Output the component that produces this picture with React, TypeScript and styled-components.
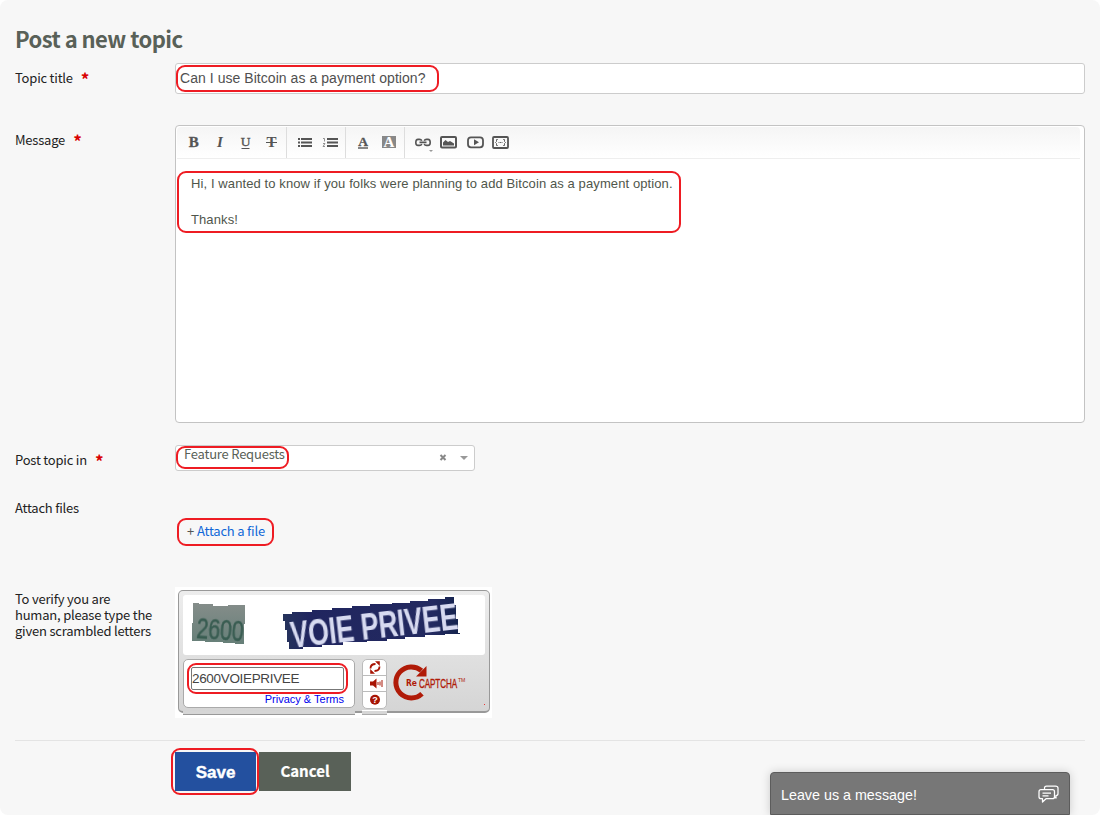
import React from 'react';
import styled, { createGlobalStyle } from 'styled-components';

const SOURCE = '"Noto Sans CJK SC", "Open Sans", sans-serif';
const ARIAL = '"Liberation Sans", Arial, sans-serif';

const Global = createGlobalStyle`
  * { box-sizing: border-box; }
  body { margin: 0; background: #fff; }
  svg { display: block; }
`;

const Page = styled.main`
  position: relative;
  width: 1100px;
  height: 815px;
  padding: 25px 15px 0;
  overflow: hidden;
  border-radius: 8px;
  background: #f7f7f7;
  color: #222;
  font: 13px/16px ${SOURCE};
  letter-spacing: -0.21px;
`;

const Heading = styled.h1`
  height: 38px;
  margin: 0;
  color: #596158;
  font-size: 22px;
  font-weight: 700;
  line-height: 26px;
  letter-spacing: -0.55px;
  white-space: nowrap;
`;

const Row = styled.div<{ $height: number }>`
  display: grid;
  grid-template-columns: 160px 910px;
  height: ${(p) => p.$height}px;
`;

const Label = styled.label<{ $top: number }>`
  padding-top: ${(p) => p.$top}px;
  white-space: pre-line;
`;

const Star = styled.span`
  margin-left: 8px;
  color: #d90000;
  font-size: 17px;
  font-weight: 700;
  line-height: 0;
  vertical-align: -3px;
`;

const Field = styled.div`
  position: relative;
`;

const Mark = styled.span<{ $x: number; $y: number; $w: number; $h: number }>`
  position: absolute;
  left: ${(p) => p.$x}px;
  top: ${(p) => p.$y}px;
  width: ${(p) => p.$w}px;
  height: ${(p) => p.$h}px;
  border: 2px solid #ee1c23;
  border-radius: 9px;
  pointer-events: none;
`;

const TitleInput = styled.div`
  height: 31px;
  padding: 0 4px;
  border: 1px solid #ccc;
  border-radius: 3px;
  background: #fff;
  color: #505050;
  font: 14px/28px ${ARIAL};
  letter-spacing: 0.05px;
`;

const Editor = styled.div`
  height: 298px;
  border: 1px solid #c3c3c3;
  border-radius: 4px;
  background: #fff;
`;

const Toolbar = styled.div`
  display: flex;
  height: 32px;
  margin: 1px 4px 0 1px;
  border-bottom: 1px solid #eee;
  border-radius: 4px 4px 0 0;
  background: linear-gradient(#f5f5f5, #fff);
`;

const Group = styled.div<{ $left: number; $right: number; $last?: boolean }>`
  display: flex;
  align-items: flex-start;
  padding: 2px ${(p) => p.$right}px 0 ${(p) => p.$left}px;
  border-right: ${(p) => (p.$last ? 'none' : '1px solid #ddd')};
`;

const Tool = styled.span`
  width: 26px;
  height: 26px;
`;

const Message = styled.div`
  padding: 16px 15px;
  color: #4f564b;
  font: 13px/18px ${ARIAL};
  letter-spacing: 0.1px;
  white-space: pre-line;
`;

const Select = styled.div`
  display: flex;
  width: 300px;
  height: 26px;
  padding: 0 3px 0 8px;
  border: 1px solid #ccc;
  border-radius: 3px;
  background: #fff;
  color: #596158;
  line-height: 16px;
`;

const SelectValue = styled.span`
  flex: 1;
`;

const Attach = styled.a`
  display: block;
  padding: 30px 0 0 12px;
  color: #1068d8;
`;

const Plus = styled.span`
  margin-right: 3px;
  color: #555;
`;

const CaptchaFrame = styled.div`
  position: relative;
  width: 317px;
  height: 131px;
  padding: 3px;
  background: #fff;
`;

const Captcha = styled.div`
  width: 312px;
  height: 123px;
  padding: 4px;
  border: 1px solid #999;
  border-width: 1px 1px 2px;
  border-radius: 5px;
  background: linear-gradient(#ededed, #d5d5d5);
`;

const Challenge = styled.div`
  height: 60px;
  border-radius: 3px;
  background: #fff;

  svg { overflow: visible; }
`;

const CaptchaControls = styled.div`
  display: flex;
  align-items: flex-start;
  padding-top: 4px;
`;

const Lip = styled.span<{ $x: number; $w: number; $y: number; $h: number; $edge?: string }>`
  position: absolute;
  left: ${(p) => p.$x}px;
  top: ${(p) => p.$y}px;
  width: ${(p) => p.$w}px;
  height: ${(p) => p.$h}px;
  background: ${(p) => (p.$edge ? '#d6d6d6' : '#fff')};
  border-bottom: ${(p) => (p.$edge ? `1px solid ${p.$edge}` : 'none')};
`;

const AnswerBox = styled.div`
  position: relative;
  width: 172px;
  height: 49px;
  padding: 7px 10px 0 7px;
  border: 1px solid #aaa;
  border-radius: 5px;
  background: #fff;
`;

const Answer = styled.div`
  height: 23px;
  border: 1px solid #777;
  border-radius: 2px;
  color: #444;
  font: 13.5px/22px ${ARIAL};
  letter-spacing: -0.33px;
`;

const Terms = styled.a`
  display: block;
  color: #00e;
  font: 11px/19px ${ARIAL};
  letter-spacing: 0;
  text-align: right;
`;

const CaptchaButtons = styled.div`
  display: flex;
  flex-direction: column;
  width: 25px;
  height: 50px;
  margin: 0 5px 0 7px;
  overflow: hidden;
  border: 1px solid #bbb;
  border-radius: 5px;
  background: #fff;
`;

const CaptchaButton = styled.span`
  height: 16px;
  border-bottom: 1px solid #bbb;
  &:last-child { border: 0; }
`;

const Actions = styled.div`
  position: relative;
  display: flex;
  gap: 3px;
  height: 75px;
  padding: 11px 0 0 160px;
  border-top: 1px solid #e4e4e4;
`;

const Button = styled.button<{ $primary?: boolean }>`
  width: ${(p) => (p.$primary ? 81 : 92)}px;
  height: 39px;
  padding: 0;
  border: 0;
  background: ${(p) => (p.$primary ? '#23509f' : '#596158')};
  color: #fff;
  font: 700 ${(p) => (p.$primary ? `17px/21px ${ARIAL}` : `15px/20px ${SOURCE}`)};
  letter-spacing: 0;
  padding: ${(p) => (p.$primary ? '1px 0 0' : '0 0 2px')};
  -webkit-text-stroke: ${(p) => (p.$primary ? '0.4px #fff' : '0.2px #fff')};
`;

const Chat = styled.aside`
  position: absolute;
  left: 770px;
  top: 772px;
  display: flex;
  align-items: center;
  justify-content: space-between;
  width: 300px;
  height: 43px;
  padding: 2px 10px 0 10px;
  border: 1px solid #5c5c5c;
  border-radius: 4px 4px 0 0;
  background: #777;
  box-shadow: 0 0 10px rgba(0, 0, 0, 0.18);
  color: #fff;
  font: 14.3px/20px ${ARIAL};
  letter-spacing: 0;
`;

const Glyph = styled.text`
  font: 700 15px "Liberation Serif", serif;
  letter-spacing: 0;
  text-anchor: middle;
  fill: #555;
`;

const Icon = ({ children }: { children: React.ReactNode }) => (
  <Tool><svg width="26" height="26" viewBox="0 0 26 26" fill="none" stroke="none">{children}</svg></Tool>
);

export default function App() {
  return (
    <Page>
      <Global />
      <Heading>Post a new topic</Heading>

      <Row $height={62}>
        <Label $top={7}>Topic title<Star>*</Star></Label>
        <Field>
          <TitleInput>Can I use Bitcoin as a payment option?</TitleInput>
          <Mark $x={1} $y={2} $w={263} $h={27} />
        </Field>
      </Row>

      <Row $height={320}>
        <Label $top={7}>Message<Star>*</Star></Label>
        <Field>
          <Editor>
            <Toolbar>
              <Group $left={3} $right={2}>
                <Icon><Glyph x="13.7" y="18" stroke="#555" strokeWidth=".3">B</Glyph></Icon>
                <Icon><Glyph x="14" y="18" fontStyle="italic" style={{ fontStyle: 'italic' }}>I</Glyph></Icon>
                <Icon><text x="13.5" y="16.5" textAnchor="middle" fontFamily="Liberation Serif, serif" fontSize="13.5" fill="#555" stroke="#555" strokeWidth=".35">U</text><path d="M9.5 19.5h8" stroke="#555" /></Icon>
                <Icon><Glyph x="13.5" y="18">T</Glyph><path d="M8 13.5h11" stroke="#555" /></Icon>
              </Group>
              <Group $left={5} $right={1}>
                <Icon><path d="M6 10h2M6 13.5h2M6 17h2M9 10h11M9 13.5h11M9 17h11" stroke="#555" strokeWidth="2" /></Icon>
                <Icon><path d="M9 10h11M9 13.5h11M9 17h11" stroke="#555" strokeWidth="2" /><path d="M5 9.5h1.5v3M5 14.5h2l-2 3h2" stroke="#777" strokeWidth=".8" /></Icon>
              </Group>
              <Group $left={4} $right={2}>
                <Icon><Glyph x="13" y="17" style={{ fontSize: 13.5 }} stroke="#555" strokeWidth=".3">A</Glyph><path d="M8 19h10" stroke="#555" strokeWidth="1.4" /></Icon>
                <Icon><path d="M6 7h14v12H6z" fill="#888" /><Glyph x="13" y="18" style={{ fill: '#fff' }}>A</Glyph></Icon>
              </Group>
              <Group $left={5} $right={0} $last>
                <Icon><path d="M11.8 11.8Q11.2 10.4 9.5 10.4H8Q5.8 10.4 5.8 13.4T8 16.4H9.5Q11.2 16.4 11.8 15M14.2 11.8Q14.8 10.4 16.5 10.4H18Q20.2 10.4 20.2 13.4T18 16.4H16.5Q14.8 16.4 14.2 15M9.5 13.4h7" stroke="#555" strokeWidth="1.6" /><path d="m19 21h4l-2 2z" fill="#999" /></Icon>
                <Icon><rect x="5" y="8" width="15" height="10.4" rx="1" stroke="#555" strokeWidth="2" /><path d="M7 16.5v-3l2.5-2.5 2.5 2 2-1 4 2.5v2z" fill="#555" /></Icon>
                <Icon><rect x="6" y="8.3" width="15" height="10" rx="3" stroke="#555" strokeWidth="1.8" /><path d="m12 10.3 5 3-5 3z" fill="#555" /></Icon>
                <Icon><rect x="5" y="8" width="15" height="11" rx="1" stroke="#555" strokeWidth="1.8" /><path d="M9.8 10.5H8.5v2L7.5 13.5l1 1v2h1.3M15.2 10.5h1.3v2l1 1-1 1v2h-1.3M10.5 13.5h1M12 13.5h1M13.5 13.5h1" stroke="#555" strokeWidth=".9" /></Icon>
              </Group>
            </Toolbar>
            <Message>{'Hi, I wanted to know if you folks were planning to add Bitcoin as a payment option.\n\nThanks!'}</Message>
          </Editor>
          <Mark $x={2} $y={46} $w={504} $h={62} />
        </Field>
      </Row>

      <Row $height={48}>
        <Label $top={7}>Post topic in<Star>*</Star></Label>
        <Field>
          <Select>
            <SelectValue>Feature Requests</SelectValue>
            <svg width="36" height="24"><path d="m5.5 9 5 5m0-5-5 5" stroke="#888" strokeWidth="2" /><path d="M25 10h8l-4 4z" fill="#999" /></svg>
          </Select>
          <Mark $x={1} $y={1} $w={113} $h={23} />
        </Field>
      </Row>

      <Row $height={94}>
        <Label $top={7}>Attach files</Label>
        <Field>
          <Attach><Plus>+</Plus>Attach a file</Attach>
          <Mark $x={2} $y={25} $w={97} $h={28} />
        </Field>
      </Row>

      <Row $height={153}>
        <Label $top={4}>{'To verify you are\nhuman, please type the\ngiven scrambled letters'}</Label>
        <Field>
          <CaptchaFrame>
            <Captcha>
              <Challenge>
                <svg width="302" height="60">
                  <defs>
                    <linearGradient id="plate" x1="0" y1="0" x2="0" y2="1"><stop stopColor="#858d8a" /><stop offset="1" stopColor="#667f78" /></linearGradient>
                    <linearGradient id="sign"><stop stopColor="#26345c" /><stop offset=".15" stopColor="#20255f" /><stop offset=".85" stopColor="#232a60" /><stop offset="1" stopColor="#14234d" /></linearGradient>
                    <filter id="soft"><feGaussianBlur stdDeviation=".7" /></filter>
                  </defs>
                  <path d="M10 8h6v1h14v2h15v-1h17v19h-1v20h-9v-1H40v-1H22v-1H9V28h1z" fill="url(#plate)" />
                  <text x="13" y="43" transform="rotate(4 13 43)" textLength="47" lengthAdjust="spacingAndGlyphs" fontFamily="Liberation Sans" fontSize="29" fill="#385c51" stroke="#385c51" strokeWidth=".5" filter="url(#soft)">2600</text>
                  <path d="M100 19H109V17H129V15H149V13H169V11H187V9H209V8H227V6H245V4H262V2H271V10H273V24H275V38H277V39H262V40H242V42H222V44H204V46H184V47H160V50H139V52H120V54H106V47H104V35H102V26H100z" fill="url(#sign)" />
                  <text x="109" y="53" transform="rotate(-6.5 109 53)" textLength="168" lengthAdjust="spacingAndGlyphs" fontFamily="Liberation Sans" fontWeight="700" fontSize="36" fill="#d7daf0" filter="url(#soft)">VOIE PRIVEE</text>
                </svg>
              </Challenge>
              <CaptchaControls>
                <AnswerBox>
                  <Answer>2600VOIEPRIVEE</Answer>
                  <Terms>Privacy &amp; Terms</Terms>
                  <Mark $x={3} $y={3} $w={161} $h={31} />
                </AnswerBox>
                <CaptchaButtons>
                  <CaptchaButton><svg width="23" height="15" fill="none" stroke="#a81404" strokeWidth="1.8"><path d="M7.5 8.5q0-4.5 5-4.5M16.500 6.500q0 4.500-5 4.500" /><path d="M12 1.300h4.800v4.700zM12 13.700H7.200V9z" fill="#a81404" stroke="none" /></svg></CaptchaButton>
                  <CaptchaButton><svg width="23" height="15" fill="none" stroke="#a81404"><path d="M7 5.500h3l3.500-3v10l-3.500-3H7z" fill="#a81404" stroke="none" /><path d="M15 6v3M17 5.500v4M19 4v7" /></svg></CaptchaButton>
                  <CaptchaButton><svg width="23" height="16"><circle cx="12" cy="7.700" r="5" fill="#a81404" /><text x="12" y="11" textAnchor="middle" fill="#fff" fontFamily="Liberation Sans" fontWeight="700" fontSize="9">?</text></svg></CaptchaButton>
                </CaptchaButtons>
                <svg width="93" height="51" fill="none">
                  <path d="M29.500 11.700a15.500 15.500 0 1 0 .5 23" stroke="#b01b08" strokeWidth="5" />
                  <path d="M24 17.500 34.500 7v10.500z" fill="#b01b08" />
                  <text x="14" y="27" textLength="11" lengthAdjust="spacingAndGlyphs" fontFamily="DejaVu Sans" fontWeight="700" fontSize="8" fill="#b01b08" letterSpacing="0">Re</text>
                  <text x="27" y="28.500" textLength="38" lengthAdjust="spacingAndGlyphs" fontFamily="Liberation Sans" fontSize="13" fill="#b01b08" stroke="#b01b08" strokeWidth=".35">CAPTCHA</text>
                  <text x="66" y="22.500" textLength="7" lengthAdjust="spacingAndGlyphs" fontFamily="Liberation Sans" fontSize="5" fill="#b01b08">TM</text>
                  <path d="M92 45h1v1h-1z" fill="#e33" />
                </svg>
              </CaptchaControls>
            </Captcha>
            <Lip $x={8} $y={124} $w={172} $h={4} $edge="#999" />
            <Lip $x={180} $y={126} $w={7} $h={4} />
            <Lip $x={187} $y={123} $w={25} $h={1} />
            <Lip $x={187} $y={124} $w={25} $h={4} $edge="#aaa" />
          </CaptchaFrame>
        </Field>
      </Row>

      <Actions>
        <Button $primary>Save</Button>
        <Button>Cancel</Button>
        <Mark $x={156} $y={7} $w={88} $h={47} />
      </Actions>

      <Chat>
        Leave us a message!
        <svg width="21" height="19" fill="none" stroke="#fff" strokeWidth="1.25" strokeLinejoin="round"><path d="M6.500 4.500V3q0-2 2-2h9q2.500 0 2.500 2v5.500q0 2-2 2v2.500l-1.500-1M3 4.700h11.500q2 0 2 2v5q0 2-2 2H8l-3.500 3.300v-3.300H3q-2 0-2-2v-5q0-2 2-2zM4.500 8h8.500M4.500 10.800h6" /></svg>
      </Chat>
    </Page>
  );
}
